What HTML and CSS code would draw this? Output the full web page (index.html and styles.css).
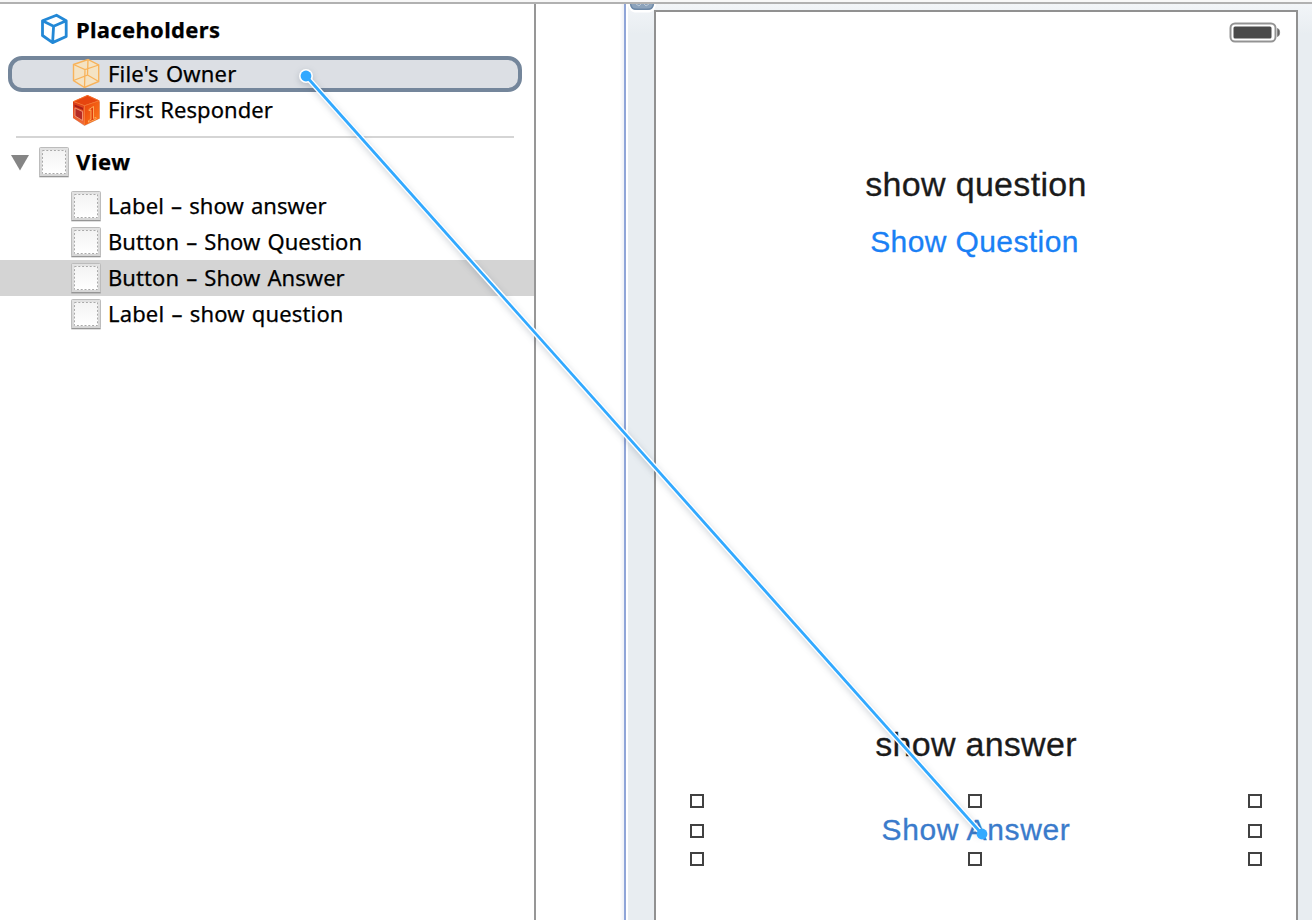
FILE: index.html
```html
<!DOCTYPE html>
<html lang="en">
<head>
<meta charset="utf-8">
<title>Interface Builder</title>
<link rel="stylesheet" href="styles.css">
</head>
<body>
<svg class="defs" width="0" height="0" aria-hidden="true">
  <defs>
    <linearGradient id="frame" x1="0" y1="0" x2="0" y2="1"><stop offset="0" stop-color="#e2e2e2"/><stop offset="1" stop-color="#d6d6d6"/></linearGradient>
    <linearGradient id="sheet" x1="0" y1="0" x2="0" y2="1"><stop offset="0" stop-color="#f3f3f3"/><stop offset="1" stop-color="#ffffff"/></linearGradient>
    <linearGradient id="left" x1="0" y1="0" x2="0" y2="1"><stop offset="0" stop-color="#d83a17"/><stop offset="1" stop-color="#f2703a"/></linearGradient>
    <linearGradient id="right" x1="0" y1="0" x2="1" y2="1"><stop offset="0" stop-color="#e8410c"/><stop offset="1" stop-color="#ff7f1c"/></linearGradient>
    <symbol id="view-icon" viewBox="0 0 32 32">
      <rect x="1" y="2" width="30" height="30" rx="1" fill="#000" opacity=".12"/>
      <rect x="1.500" y="1.500" width="29" height="29" rx="1" fill="url(#frame)" stroke="#bcbcbc"/>
      <path d="M1.500 30.500H30.500" stroke="#969696"/>
      <rect x="4" y="4" width="24" height="24" fill="url(#sheet)"/>
      <rect x="4.500" y="4.500" width="23" height="23" fill="none" stroke="#a9a9a9" stroke-dasharray="2 1.800"/>
    </symbol>
  </defs>
</svg>
<div class="window">
  <div class="topbar"></div>
  <main class="workspace">
    <aside class="outline">
      <div class="row head">
        <svg class="icon cube" viewBox="0 0 32 32"><path d="M4.500 8.800 18.500 3.200 28.200 8.700V24.500L14.600 30.600 4.500 23.500ZM4.500 8.800 15.600 14.200 28.200 8.700M15.600 14.200 14.600 30.600" fill="none" stroke="#2388d6" stroke-width="2.800" stroke-linejoin="round"/></svg>
        <span class="t1">Placeholders</span>
      </div>
      <div class="row child owner">
        <svg class="icon" viewBox="0 0 32 32"><path d="M3.500 7.500 18 2.500 28.700 8V24.500L14.500 30.500 3.500 23.500Z" fill="#f4e3c4" stroke="#f8b35b" stroke-width="1.400"/><path d="M3.500 7.500 15 12.500 28.700 8M15 12.500 14.500 30.500M18 2.500 17.500 18 3.500 23.500M17.500 18 28.700 24.500" fill="none" stroke="#f8b35b" stroke-width="1.300"/></svg>
        <span class="t2">File's Owner</span>
      </div>
      <div class="row child">
        <svg class="icon" viewBox="0 0 32 32"><path d="M3 8 17.500 1.500 30 8V24.500L14.500 32 3 24Z" fill="#8d5542" opacity=".4"/><path d="M3 7.500 17.500 1 29.500 6.500 14.500 11.500Z" fill="#e6450f"/><path d="M3 7.500 14.500 11.500V31.500L3 24Z" fill="url(#left)"/><path d="M14.500 11.500 29.500 6.500V24.500L14.500 31.500Z" fill="url(#right)"/><path d="M3.500 7.500 17.500 1.500 29 6.800 14.500 11.700ZM14.500 12V31" fill="none" stroke="#f97a30" stroke-width=".8"/><path d="M4.500 10.500 13 13.800V16L4.500 12.500Z" fill="#a92018"/><path d="M5 14 12.500 17.500V26.500L5 22Z" fill="#b52b25" stroke="#f49a78" stroke-width=".9"/><path d="M19 15.500 23.500 12.500V24.500L26 23.500V25L18.500 28.200V26.700L21 25.500V15.700L19 16.700Z" fill="#e23c0a" stroke="#ffc06b" stroke-width=".8"/></svg>
        <span class="t3">First Responder</span>
      </div>
      <div class="divider"></div>
      <div class="row head view">
        <svg class="arrow" viewBox="0 0 18 16"><path d="M0 0H18L9 15.500Z" fill="#858585"/></svg>
        <svg class="icon"><use href="#view-icon"/></svg>
        <span class="t4">View</span>
      </div>
      <div class="children">
        <div class="row child"><svg class="icon"><use href="#view-icon"/></svg><span class="t5">Label – show answer</span></div>
        <div class="row child"><svg class="icon"><use href="#view-icon"/></svg><span class="t6">Button – Show Question</span></div>
        <div class="row child selected"><svg class="icon"><use href="#view-icon"/></svg><span class="t7">Button – Show Answer</span></div>
        <div class="row child"><svg class="icon"><use href="#view-icon"/></svg><span class="t8">Label – show question</span></div>
      </div>
    </aside>
    <div class="gutter"></div>
    <section class="canvas">
      <svg class="close" viewBox="0 0 30 10"><path d="M1 0H29C28 6.500 25 8.500 21 8.500H9C5 8.500 2 6.500 1 0Z" fill="#fff"/><path d="M3 0H27C26 4.500 24 6 20 6H10C6 6 4 4.500 3 0Z" fill="#8ca3bc"/><path d="M3.500 0C4.500 4.500 6 5.300 10 5.300H20C24 5.300 25.500 4.500 26.500 0" fill="none" stroke="#6c88a7" stroke-width="1.400"/><path d="M9 0 12 2 14 0M17 0 19 2 22 0" fill="none" stroke="#bac8d7"/></svg>
      <div class="phone">
        <svg class="battery" viewBox="0 0 52 22"><rect x="1.500" y="1.500" width="45" height="18" rx="4.500" fill="#fff" stroke="#939393" stroke-width="2"/><rect x="4.500" y="4.500" width="38" height="12" rx="1.500" fill="#4a4a4a"/><path d="M48.500 6.500C51.300 7 51.300 14 48.500 14.500Z" fill="#666" stroke="#777" stroke-width=".7"/></svg>
        <div class="label question"><span class="p1">show question</span></div>
        <div class="button ask"><span class="p2">Show Question</span></div>
        <div class="label answer"><span class="p3">show answer</span></div>
        <div class="button picked">
          <span class="p4">Show Answer</span>
          <i class="handle n w"></i><i class="handle n c"></i><i class="handle n e"></i>
          <i class="handle m w"></i><i class="handle m e"></i>
          <i class="handle s w"></i><i class="handle s c"></i><i class="handle s e"></i>
        </div>
      </div>
    </section>
  </main>
  <svg class="connection" viewBox="0 0 1312 920">
    <g class="halo"><path d="M306 76 982 834" stroke="#fff" stroke-width="5.600"/><circle cx="306" cy="76" r="7" fill="#fff"/></g>
    <path d="M306 76 982 834" stroke="#32a9ff" stroke-width="2.800"/>
    <circle cx="306" cy="76" r="5.400" fill="#32a9ff"/><circle cx="982" cy="834" r="5.400" fill="#32a9ff"/>
  </svg>
</div>
</body>
</html>
```
FILE: styles.css
```css
* { box-sizing: border-box; }
body { margin: 0; background: #fff; }
.defs { position: absolute; }
.window { position: relative; width: 1312px; height: 920px; overflow: hidden; display: flex; flex-direction: column; }
.topbar { height: 4px; flex: none; background: #f8f8f8; border-bottom: 2px solid #b1b1b1; }
.workspace { flex: 1; display: flex; min-height: 0; }

.outline { width: 536px; border-right: 2px solid #979797; padding-top: 8px; font: 22px/36px "Noto Sans", sans-serif; color: #000; font-variant-ligatures: none; }
.row { height: 36px; display: flex; align-items: center; white-space: nowrap; }
.row span { padding-bottom: 2px; line-height: 34px; word-spacing: 1.3px; -webkit-text-stroke: .25px; }
.icon { width: 32px; height: 32px; flex: none; margin-right: 6px; }
.head { padding-left: 38px; font-weight: 700; }
.head .cube { margin-top: -4px; }
.child { padding-left: 70px; }
.owner { margin: 8px 12px 0 8px; padding-left: 58px; border: 4px solid #74869b; border-radius: 14px; background: #dcdfe4; }
.owner .icon { margin-top: -2px; }
.divider { height: 2px; margin: 8px 20px 6px 16px; background: #d5d5d5; }
.view { padding-left: 11px; }
.arrow { width: 18px; height: 16px; margin: 2px 9px 0 0; }
.children { padding-top: 8px; }
.selected { background: #d4d4d4; }
.t1 { letter-spacing: .32px; }
.t2 { letter-spacing: .17px; }
.t3 { letter-spacing: .08px; }
.t4 { letter-spacing: .6px; }
.t5 { letter-spacing: .08px; }
.t6 { letter-spacing: .06px; }
.t7 { letter-spacing: .06px; }
.t8 { letter-spacing: .15px; }

.gutter { width: 92px; border-right: 2px solid #fff; box-shadow: inset -2px 0 0 #8fa5d8; background: linear-gradient(to right, #fff 80px, #fff 84px, #eef1f7 88px); }
.canvas { position: relative; flex: 1; padding: 6px 14px 0 26px; background: linear-gradient(#f2f5f8, #e8edf1 30px); }
.close { position: absolute; left: -1px; top: 0; width: 30px; height: 10px; }
.phone { height: 910px; border: 2px solid #919191; border-bottom: 0; background: #fff; display: flex; flex-direction: column; align-items: center; font-family: "Liberation Sans", Arial, sans-serif; -webkit-text-stroke: .3px; }
.battery { width: 52px; height: 22px; flex: none; align-self: flex-end; margin: 10px 15px 0 0; }
.label { height: 42px; font-size: 34px; line-height: 42px; color: #1b1b1b; white-space: nowrap; }
.button { height: 58px; font-size: 30px; line-height: 58px; color: #1a80f5; white-space: nowrap; }
.question { margin-top: 119px; }
.ask { margin-top: 8px; padding-right: 3px; }
.answer { margin-top: 452px; }
.picked { position: relative; width: 558px; margin-top: 36px; text-align: center; color: #3a7bcb; }
.p1 { letter-spacing: .33px; }
.p2 { letter-spacing: .4px; }
.p3 { letter-spacing: .28px; }
.p4 { letter-spacing: .65px; }
.handle { position: absolute; width: 14px; height: 14px; border: 2px solid #414141; background: #fff; }
.n { top: -7px; } .m { top: 23px; } .s { top: 51px; }
.w { left: -7px; } .c { left: 271px; } .e { right: -7px; }
.connection { position: absolute; inset: 0; width: 1312px; height: 920px; pointer-events: none; fill: none; }
.halo { filter: drop-shadow(0 2px 3px rgba(40, 60, 80, .22)); }
```
